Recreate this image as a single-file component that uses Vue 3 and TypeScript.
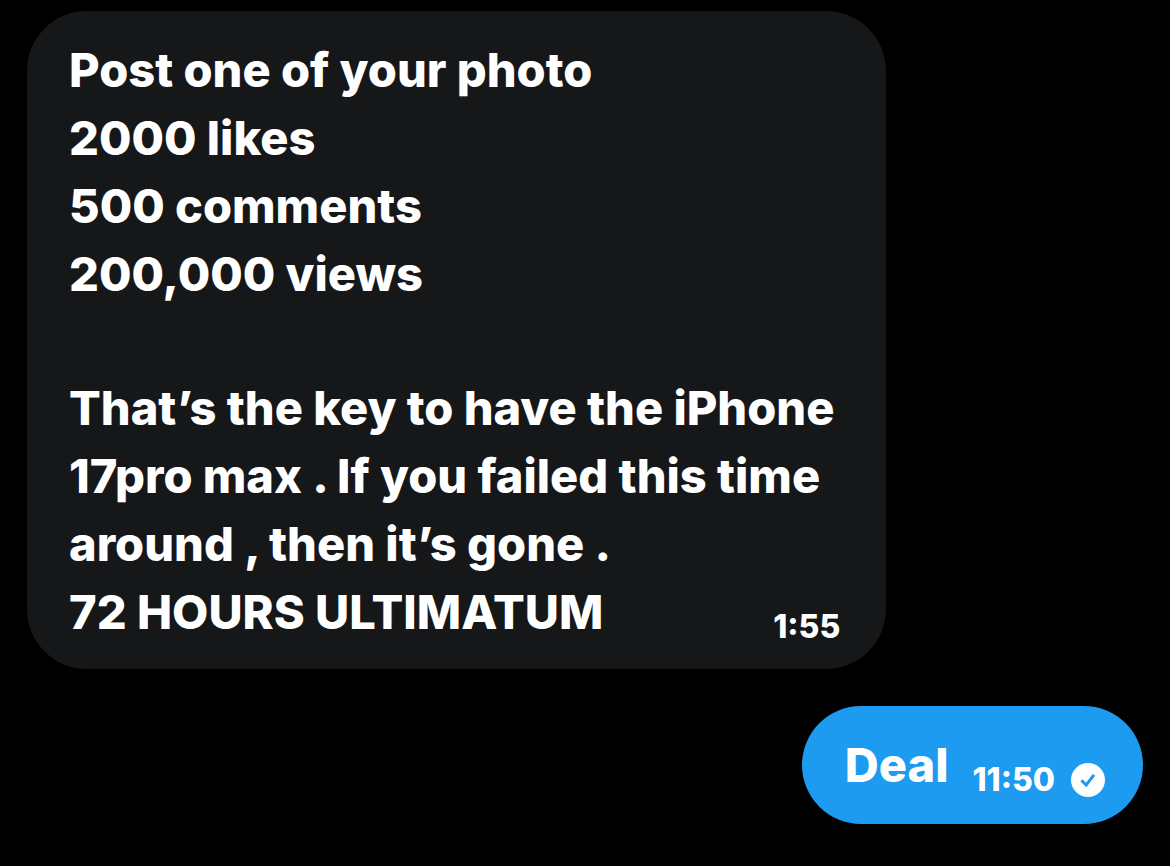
<script setup lang="ts">
interface Message {
  id: number
  paragraphs: string[]
  closing: string
  time: string
  sent: boolean
}

const messages: Message[] = [
  {
    id: 1,
    paragraphs: [
      'Post one of your photo\n2000 likes\n500 comments\n200,000 views',
      'That’s the key to have the iPhone\n17pro max . If you failed this time\naround , then it’s gone .',
    ],
    closing: '72 HOURS ULTIMATUM',
    time: '1:55',
    sent: false,
  },
  { id: 2, paragraphs: [], closing: 'Deal', time: '11:50', sent: true },
]
</script>

<template>
  <main class="chat">
    <article v-for="m in messages" :key="m.id" class="bubble" :class="m.sent ? 'sent' : 'received'">
      <p v-for="p in m.paragraphs" :key="p" class="text">{{ p }}</p>
      <div class="last-row">
        <p class="text">{{ m.closing }}</p>
        <div class="meta">
          <time>{{ m.time }}</time>
          <svg v-if="m.sent" class="check" viewBox="0 0 34 34" role="img" aria-label="Delivered">
            <circle cx="17" cy="17" r="17" fill="#fff" />
            <path d="M10.4 17.4l4.8 4.6 7.8-10.2" fill="none" stroke="#1d9bf0" stroke-width="3" />
          </svg>
        </div>
      </div>
    </article>
  </main>
</template>

<style>
body {
  margin: 0;
  background: #000;
}
</style>

<style scoped>
.chat {
  box-sizing: border-box;
  min-height: 100vh;
  padding: 11px 27px 40px;
  display: flex;
  flex-direction: column;
  align-items: flex-start;
  gap: 37px;
  background: #000;
  color: #fff;
  font-family: Inter, "Liberation Sans", sans-serif;
  font-weight: 800;
}

.bubble {
  box-sizing: border-box;
  border-radius: 60px;
}

.received {
  width: 77%;
  padding: 25px 46px 23px 42px;
  background: #161719;
}

.sent {
  align-self: flex-end;
  padding: 25px 38px 25px 43px;
  background: #1d9bf0;
}

.text {
  margin: 0;
  font-size: 47px;
  line-height: 68px;
  white-space: pre;
}

.text + .text {
  margin-top: 66px;
}

.last-row {
  display: flex;
  align-items: flex-end;
  justify-content: space-between;
  gap: 24px;
}

.meta {
  display: flex;
  align-items: center;
  gap: 16px;
  font-size: 32px;
  line-height: 38px;
}

.check {
  width: 34px;
  height: 34px;
}
</style>
